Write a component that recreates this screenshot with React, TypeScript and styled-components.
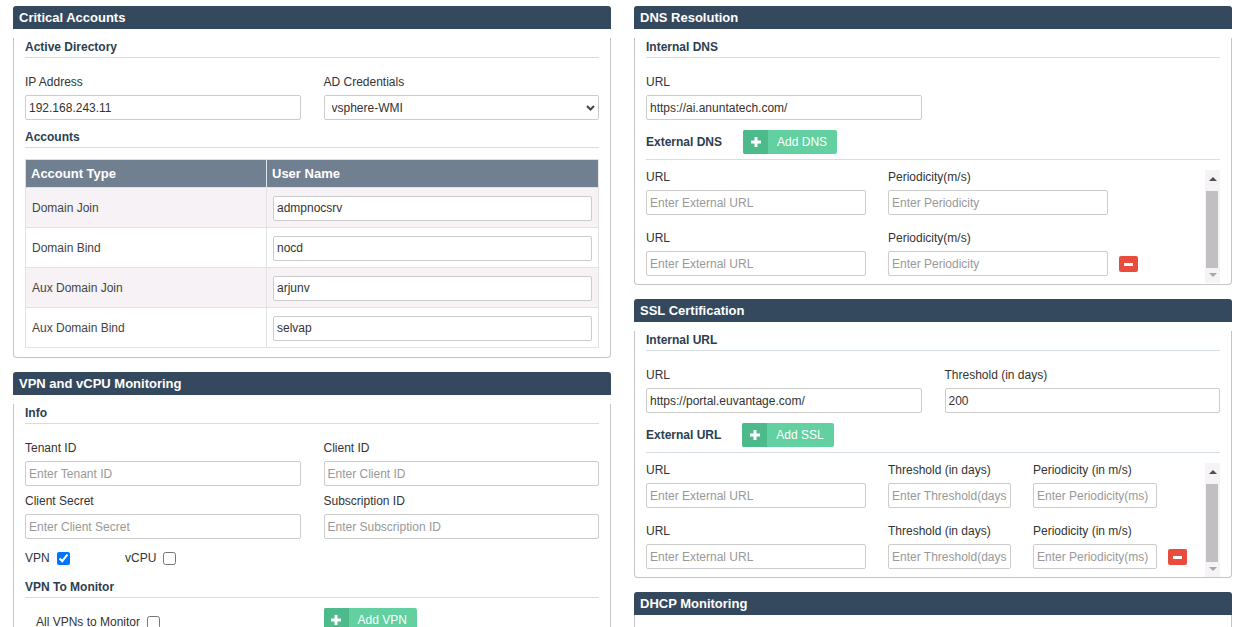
import * as React from 'react';
import styled, { createGlobalStyle } from 'styled-components';

const GlobalStyle = createGlobalStyle`
  * { box-sizing: border-box; }
  body {
    margin: 0;
    background: #fff;
    font-family: "Liberation Sans", Arial, sans-serif;
    font-size: 12px;
    color: #333;
  }
`;

const Page = styled.div`
  display: grid;
  grid-template-columns: 598px 598px;
  column-gap: 23px;
  align-items: start;
  padding: 6px 0 0 13px;
`;

const Column = styled.div`
  display: flex;
  flex-direction: column;
  gap: 14px;
`;

const Panel = styled.section``;

const PanelHeader = styled.div`
  height: 23px;
  line-height: 23px;
  padding: 0 6px;
  background: #34495e;
  color: #fff;
  font-size: 13px;
  font-weight: bold;
  border-radius: 3px 3px 0 0;
`;

const PanelBody = styled.div<{ $pb?: number; $h?: number }>`
  border: 1px solid #c4c4c4;
  border-top: 0;
  border-radius: 0 0 4px 4px;
  padding: 0 11px ${(p) => p.$pb ?? 8}px;
  ${(p) => (p.$h ? `height: ${p.$h}px;` : '')}
`;

const SectionTitle = styled.div<{ $mt?: number; $withAction?: boolean }>`
  display: flex;
  align-items: center;
  margin-top: ${(p) => p.$mt ?? 9}px;
  padding-top: ${(p) => (p.$withAction ? 0 : 1)}px;
  padding-bottom: ${(p) => (p.$withAction ? 5 : 2)}px;
  border-bottom: 1px solid #d5dce2;
  font-size: 12px;
  font-weight: bold;
  line-height: 16px;
  color: #2c3e50;
`;

const FieldGrid = styled.div`
  display: grid;
  grid-template-columns: 1fr 1fr;
  column-gap: 23px;
  row-gap: 6px;
  margin-top: 15px;
`;

const Field = styled.div<{ $w?: number }>`
  ${(p) => (p.$w ? `width: ${p.$w}px;` : '')}
`;

const FieldLabel = styled.label`
  display: block;
  line-height: 16px;
  padding-top: 1px;
  margin-bottom: 5px;
  color: #333;
  white-space: nowrap;
`;

const TextInput = styled.input`
  display: block;
  width: 100%;
  height: 25px;
  padding: 0 3px;
  border: 1px solid #ccc;
  border-radius: 2px;
  background: #fff;
  font: 12px "Liberation Sans", Arial, sans-serif;
  color: #333;
  outline: none;
  &::placeholder {
    color: #999;
  }
`;

const SelectWrap = styled.div`
  position: relative;
`;

const Select = styled.select`
  display: block;
  width: 100%;
  height: 25px;
  padding: 0 20px 0 7px;
  border: 1px solid #ccc;
  border-radius: 2px;
  background: #fff;
  font: 12px "Liberation Sans", Arial, sans-serif;
  color: #333;
  appearance: none;
  outline: none;
`;

const Chevron = styled.svg`
  position: absolute;
  right: 4px;
  top: 10px;
  pointer-events: none;
`;

const Table = styled.table`
  width: 100%;
  margin-top: 11px;
  border-collapse: collapse;
  border: 1px solid #dedede;
`;

const Th = styled.th`
  height: 28px;
  padding: 0 5px;
  background: #708090;
  color: #fff;
  font-size: 13px;
  font-weight: bold;
  text-align: left;
  border-right: 1px solid #e4e7eb;
`;

const Tr = styled.tr`
  &:nth-child(odd) {
    background: #f6f2f5;
  }
`;

const Td = styled.td<{ $w?: number }>`
  height: 40px;
  padding: 1px 6px 0;
  border: 1px solid #e2e2e2;
  color: #444;
  ${(p) => (p.$w ? `width: ${p.$w}px;` : '')}
`;

const CheckRow = styled.div`
  display: flex;
  align-items: center;
  margin-top: 11px;
  line-height: 16px;
`;

const CheckItem = styled.label<{ $w?: number; $pl?: number; $mt?: number }>`
  display: flex;
  align-items: center;
  line-height: 16px;
  ${(p) => (p.$w ? `width: ${p.$w}px;` : '')}
  padding-left: ${(p) => p.$pl ?? 0}px;
  margin-top: ${(p) => p.$mt ?? 0}px;
  color: #333;
`;

const Checkbox = styled.input`
  width: 13px;
  height: 13px;
  margin: 0 0 0 7px;
`;

const MonitorRow = styled.div`
  display: grid;
  grid-template-columns: 1fr 1fr;
  column-gap: 23px;
  align-items: start;
  margin-top: 10px;
`;

const AddButton = styled.button<{ $inline?: boolean }>`
  display: inline-flex;
  align-items: stretch;
  height: 24px;
  margin-left: ${(p) => (p.$inline ? 21 : 0)}px;
  padding: 0;
  border: 0;
  border-radius: 2px;
  overflow: hidden;
  background: #62d0a0;
  color: #fff;
  font: 12px "Liberation Sans", Arial, sans-serif;
  cursor: pointer;
  justify-self: start;
`;

const AddIcon = styled.span`
  width: 25px;
  display: flex;
  align-items: center;
  justify-content: center;
  background: #4dba8b;
`;

const AddText = styled.span`
  display: flex;
  align-items: center;
  padding: 0 10px 0 9px;
`;

/* scroll list with a drawn scrollbar beside it */
const ScrollArea = styled.div<{ $h: number }>`
  display: flex;
  margin-top: 8px;
  height: ${(p) => p.$h}px;
`;

const ScrollContent = styled.div`
  flex: 1;
  overflow: hidden;
`;

const ScrollTrack = styled.div`
  width: 15px;
  margin-top: 2px;
  display: flex;
  flex-direction: column;
  align-items: center;
  background: #f6f3f6;
`;

const Arrow = styled.div<{ $dir: 'up' | 'down' }>`
  flex: none;
  height: ${(p) => (p.$dir === 'up' ? 21 : 15)}px;
  padding-top: ${(p) => (p.$dir === 'up' ? 7 : 5)}px;
  &::before {
    content: '';
    display: block;
    border-left: 4px solid transparent;
    border-right: 4px solid transparent;
    ${(p) =>
      p.$dir === 'up'
        ? 'border-bottom: 4px solid #505050;'
        : 'border-top: 4px solid #a8a6a9;'}
  }
`;

const Thumb = styled.div`
  flex: 1;
  width: 12px;
  margin-right: 1px;
  background: #c1bfc2;
`;

function Scrollbar() {
  return (
    <ScrollTrack>
      <Arrow $dir="up" />
      <Thumb />
      <Arrow $dir="down" />
    </ScrollTrack>
  );
}

const EntryRow = styled.div`
  display: flex;
  & + & {
    margin-top: 14px;
  }
`;

const EntryFields = styled.div`
  display: flex;
  gap: 22px;
`;

const MinusButton = styled.button`
  align-self: flex-end;
  width: 19px;
  height: 16px;
  margin: 0 0 4px 11px;
  padding: 0;
  border: 0;
  border-radius: 2px;
  background: #e74c3c;
  display: flex;
  align-items: center;
  justify-content: center;
  &::after {
    content: '';
    width: 9px;
    height: 3px;
    background: #fff;
  }
`;

function Plus() {
  return (
    <svg width="10" height="10" viewBox="0 0 10 10">
      <path d="M5 0v10M0 5h10" stroke="#fff" strokeWidth="3" />
    </svg>
  );
}

function AddBtn({ label, inline }: { label: string; inline?: boolean }) {
  return (
    <AddButton $inline={inline}>
      <AddIcon>
        <Plus />
      </AddIcon>
      <AddText>{label}</AddText>
    </AddButton>
  );
}

const accounts = [
  { type: 'Domain Join', user: 'admpnocsrv' },
  { type: 'Domain Bind', user: 'nocd' },
  { type: 'Aux Domain Join', user: 'arjunv' },
  { type: 'Aux Domain Bind', user: 'selvap' },
];

function CriticalAccounts() {
  return (
    <Panel>
      <PanelHeader>Critical Accounts</PanelHeader>
      <PanelBody $pb={9}>
        <SectionTitle>Active Directory</SectionTitle>
        <FieldGrid>
          <Field>
            <FieldLabel>IP Address</FieldLabel>
            <TextInput defaultValue="192.168.243.11" />
          </Field>
          <Field>
            <FieldLabel>AD Credentials</FieldLabel>
            <SelectWrap>
              <Select defaultValue="vsphere-WMI">
                <option>vsphere-WMI</option>
              </Select>
              <Chevron width="9" height="6" viewBox="0 0 9 6">
                <path d="M1 1l3.5 3.5L8 1" fill="none" stroke="#444" strokeWidth="2" />
              </Chevron>
            </SelectWrap>
          </Field>
        </FieldGrid>
        <SectionTitle $mt={8}>Accounts</SectionTitle>
        <Table>
          <thead>
            <tr>
              <Th>Account Type</Th>
              <Th>User Name</Th>
            </tr>
          </thead>
          <tbody>
            {accounts.map((a) => (
              <Tr key={a.type}>
                <Td $w={241}>{a.type}</Td>
                <Td>
                  <TextInput defaultValue={a.user} />
                </Td>
              </Tr>
            ))}
          </tbody>
        </Table>
      </PanelBody>
    </Panel>
  );
}

function VpnMonitoring() {
  return (
    <Panel>
      <PanelHeader>VPN and vCPU Monitoring</PanelHeader>
      <PanelBody $pb={20}>
        <SectionTitle>Info</SectionTitle>
        <FieldGrid>
          <Field>
            <FieldLabel>Tenant ID</FieldLabel>
            <TextInput placeholder="Enter Tenant ID" />
          </Field>
          <Field>
            <FieldLabel>Client ID</FieldLabel>
            <TextInput placeholder="Enter Client ID" />
          </Field>
          <Field>
            <FieldLabel>Client Secret</FieldLabel>
            <TextInput placeholder="Enter Client Secret" />
          </Field>
          <Field>
            <FieldLabel>Subscription ID</FieldLabel>
            <TextInput placeholder="Enter Subscription ID" />
          </Field>
        </FieldGrid>
        <CheckRow>
          <CheckItem $w={100}>
            VPN
            <Checkbox type="checkbox" defaultChecked />
          </CheckItem>
          <CheckItem>
            vCPU
            <Checkbox type="checkbox" />
          </CheckItem>
        </CheckRow>
        <SectionTitle $mt={12}>VPN To Monitor</SectionTitle>
        <MonitorRow>
          <CheckItem $pl={11} $mt={6}>
            All VPNs to Monitor
            <Checkbox type="checkbox" />
          </CheckItem>
          <AddBtn label="Add VPN" />
        </MonitorRow>
      </PanelBody>
    </Panel>
  );
}

function DnsResolution() {
  return (
    <Panel>
      <PanelHeader>DNS Resolution</PanelHeader>
      <PanelBody $pb={1}>
        <SectionTitle>Internal DNS</SectionTitle>
        <FieldGrid>
          <Field>
            <FieldLabel>URL</FieldLabel>
            <TextInput defaultValue="https://ai.anuntatech.com/" />
          </Field>
        </FieldGrid>
        <SectionTitle $mt={10} $withAction>
          External DNS
          <AddBtn label="Add DNS" inline />
        </SectionTitle>
        <ScrollArea $h={115}>
          <ScrollContent>
            {[0, 1].map((i) => (
              <EntryRow key={i}>
                <EntryFields>
                  <Field $w={220}>
                    <FieldLabel>URL</FieldLabel>
                    <TextInput placeholder="Enter External URL" />
                  </Field>
                  <Field $w={220}>
                    <FieldLabel>Periodicity(m/s)</FieldLabel>
                    <TextInput placeholder="Enter Periodicity" />
                  </Field>
                </EntryFields>
                {i > 0 && <MinusButton />}
              </EntryRow>
            ))}
          </ScrollContent>
          <Scrollbar />
        </ScrollArea>
      </PanelBody>
    </Panel>
  );
}

function SslCertification() {
  return (
    <Panel>
      <PanelHeader>SSL Certification</PanelHeader>
      <PanelBody $pb={0}>
        <SectionTitle>Internal URL</SectionTitle>
        <FieldGrid>
          <Field>
            <FieldLabel>URL</FieldLabel>
            <TextInput defaultValue="https://portal.euvantage.com/" />
          </Field>
          <Field>
            <FieldLabel>Threshold (in days)</FieldLabel>
            <TextInput defaultValue="200" />
          </Field>
        </FieldGrid>
        <SectionTitle $mt={10} $withAction>
          External URL
          <AddBtn label="Add SSL" inline />
        </SectionTitle>
        <ScrollArea $h={116}>
          <ScrollContent>
            {[0, 1].map((i) => (
              <EntryRow key={i}>
                <EntryFields>
                  <Field $w={220}>
                    <FieldLabel>URL</FieldLabel>
                    <TextInput placeholder="Enter External URL" />
                  </Field>
                  <Field $w={123}>
                    <FieldLabel>Threshold (in days)</FieldLabel>
                    <TextInput placeholder="Enter Threshold(days)" />
                  </Field>
                  <Field $w={124}>
                    <FieldLabel>Periodicity (in m/s)</FieldLabel>
                    <TextInput placeholder="Enter Periodicity(ms)" />
                  </Field>
                </EntryFields>
                {i > 0 && <MinusButton />}
              </EntryRow>
            ))}
          </ScrollContent>
          <Scrollbar />
        </ScrollArea>
      </PanelBody>
    </Panel>
  );
}

function DhcpMonitoring() {
  return (
    <Panel>
      <PanelHeader>DHCP Monitoring</PanelHeader>
      <PanelBody $h={40} />
    </Panel>
  );
}

function App(): JSX.Element {
  return (
    <>
      <GlobalStyle />
      <Page>
        <Column>
          <CriticalAccounts />
          <VpnMonitoring />
        </Column>
        <Column>
          <DnsResolution />
          <SslCertification />
          <DhcpMonitoring />
        </Column>
      </Page>
    </>
  );
}

export default App;
